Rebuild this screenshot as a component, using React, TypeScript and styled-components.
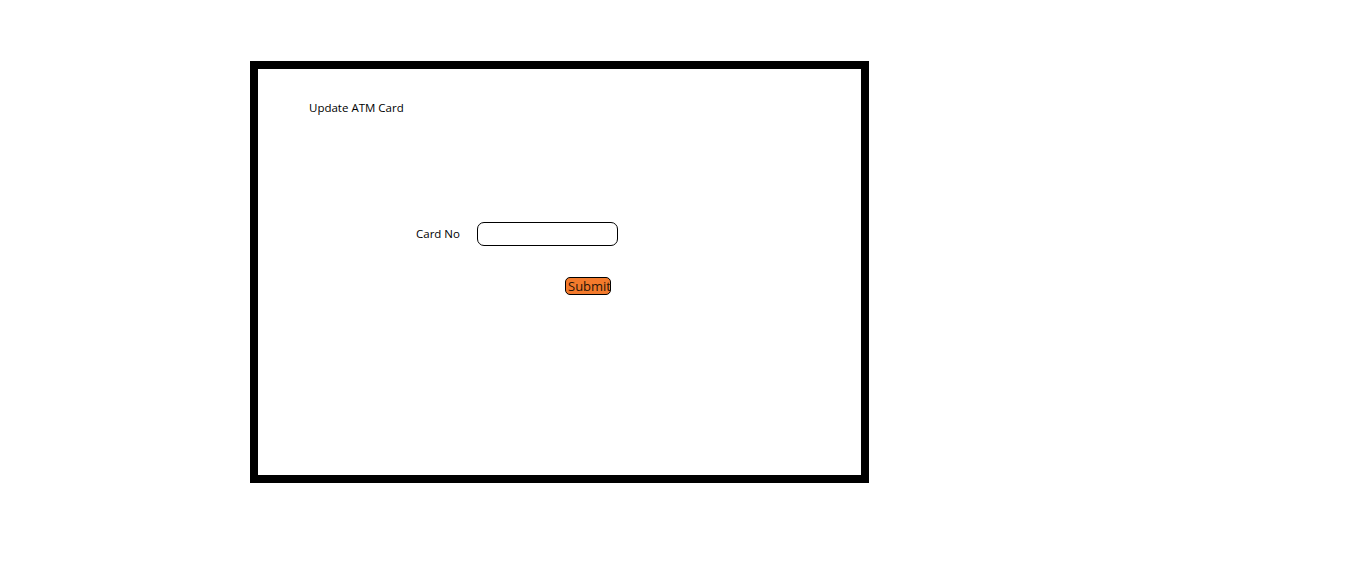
import React, { useState } from 'react'
import styled, { createGlobalStyle } from 'styled-components'

const GlobalStyle = createGlobalStyle`
  html, body {
    margin: 0;
    padding: 0;
    background: #ffffff;
  }
  body {
    font-family: "Open Sans", "Noto Sans", sans-serif;
    color: #000000;
  }
`

const Page = styled.div`
  width: 1360px;
  height: 569px;
  padding: 61px 0 0 250px;
  box-sizing: border-box;
`

const Frame = styled.div`
  width: 619px;
  height: 422px;
  box-sizing: border-box;
  border: 8px solid #000000;
  padding: 31px 0 0 51px;
  display: flex;
  flex-direction: column;
`

const Title = styled.h1`
  margin: 0;
  font-size: 11.5px;
  line-height: 16px;
  font-weight: 400;
`

const Form = styled.form`
  margin: 106px 0 0 107px;
  display: flex;
  flex-direction: column;
  gap: 31px;
`

const Row = styled.div`
  display: flex;
  align-items: center;
`

const Label = styled.label`
  font-size: 11.5px;
  line-height: 16px;
  width: 61px;
`

const Input = styled.input`
  width: 141px;
  height: 24px;
  box-sizing: border-box;
  border: 1px solid #000000;
  border-radius: 7px;
  padding: 0 8px;
  font-family: inherit;
  font-size: 12px;
  background: #ffffff;
  outline: none;
`

const SubmitButton = styled.button`
  margin-left: 149px;
  width: 46px;
  height: 18px;
  box-sizing: border-box;
  padding: 0 0 0 2px;
  border: 1px solid #000000;
  border-radius: 5px;
  background: #f37a2c;
  color: #2a1406;
  font-family: "Open Sans", "Noto Sans", sans-serif;
  font-size: 13px;
  line-height: 16px;
  text-align: left;
  white-space: nowrap;
  overflow: visible;
  cursor: pointer;
`

export default function App() {
  const [cardNo, setCardNo] = useState('')

  return (
    <Page>
      <GlobalStyle />
      <Frame>
        <Title>Update ATM Card</Title>
        <Form onSubmit={(e) => e.preventDefault()}>
          <Row>
            <Label htmlFor="cardNo">Card No</Label>
            <Input id="cardNo" value={cardNo} onChange={(e) => setCardNo(e.target.value)} />
          </Row>
          <Row>
            <SubmitButton type="submit">Submit</SubmitButton>
          </Row>
        </Form>
      </Frame>
    </Page>
  )
}
